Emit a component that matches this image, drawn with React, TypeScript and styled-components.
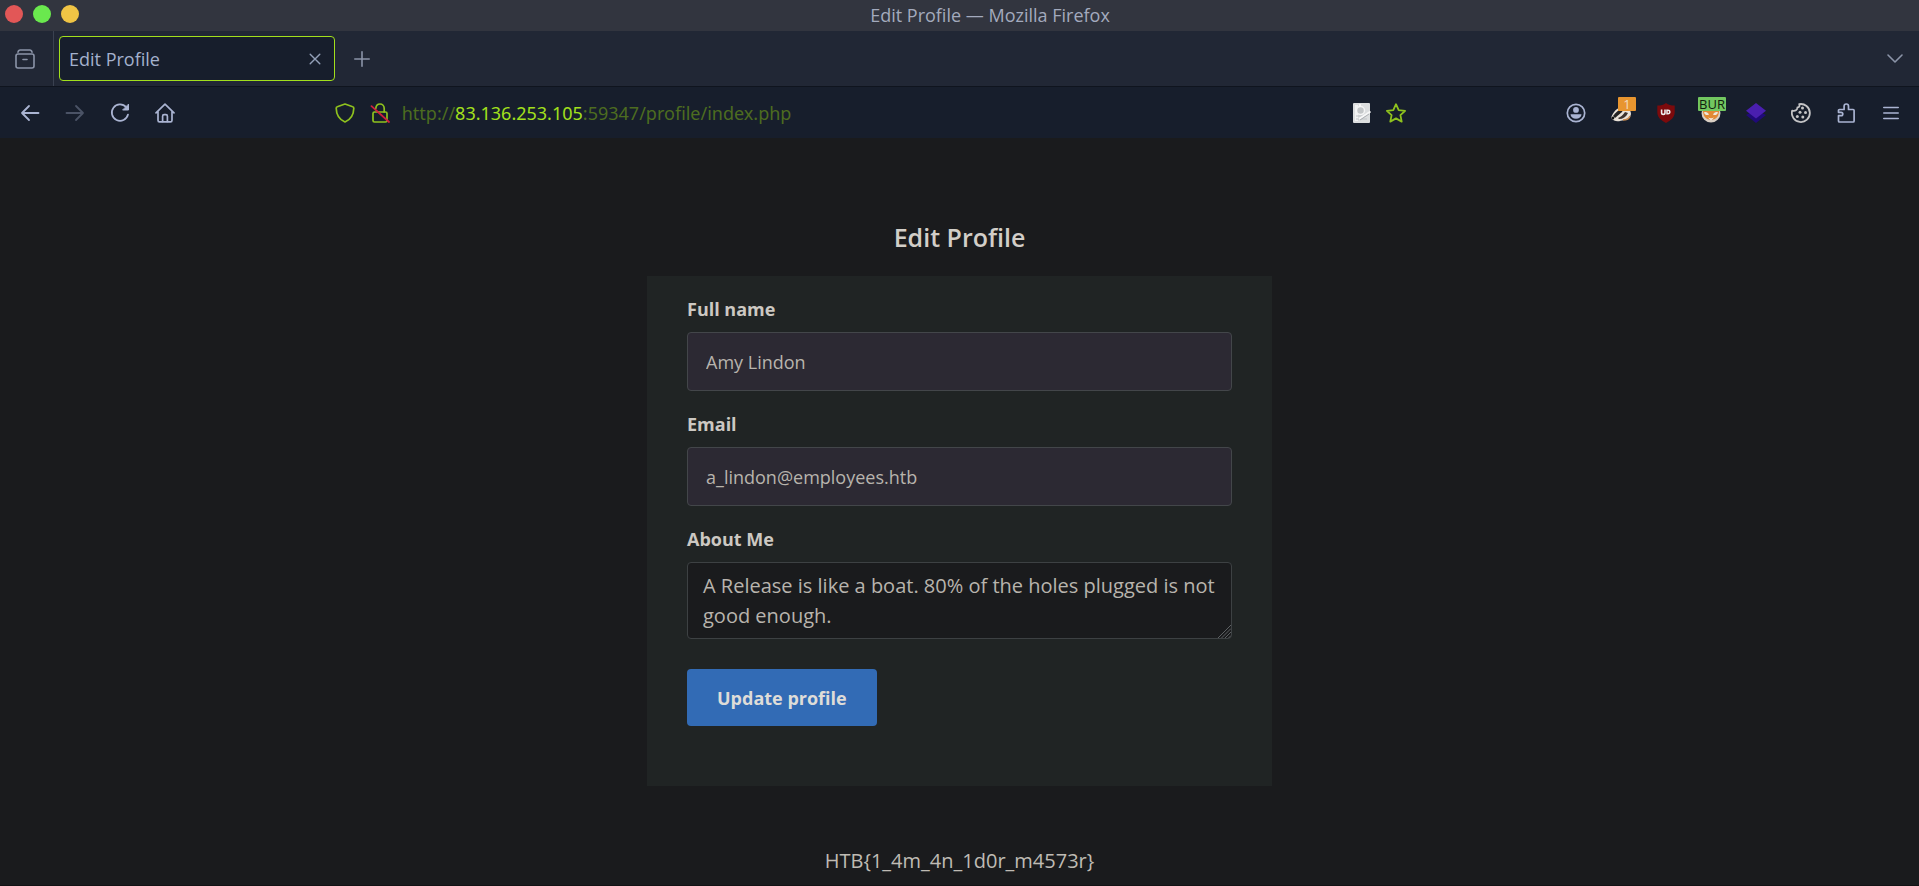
import React from "react";
import styled, { createGlobalStyle } from "styled-components";

const GlobalStyle = createGlobalStyle`
  *, *::before, *::after { box-sizing: border-box; }
  html, body { margin: 0; padding: 0; background: #1a1b1d; }
  body { font-family: "Open Sans", "Noto Sans", sans-serif; color: #bfbbb4; }
  button, input, textarea { font-family: inherit; }
`;

const Window = styled.div`
  display: flex;
  flex-direction: column;
  min-height: 100vh;
  border-bottom: 1px solid #121214;
`;

const TitleBar = styled.header`
  display: flex;
  align-items: center;
  height: 31px;
  padding: 0 18px 4px 5px;
  background: #32353f;
`;

const WindowButtons = styled.div`
  display: flex;
  gap: 10px;
`;

const WindowButton = styled.button<{ $color: string }>`
  width: 18px;
  height: 18px;
  padding: 0;
  border: 0;
  border-radius: 50%;
  background: ${(p) => p.$color};
`;

const WindowTitle = styled.div`
  flex: 1;
  padding-top: 2px;
  text-align: center;
  font-size: 18px;
  line-height: 24px;
  color: #a3aabd;
`;

const TabStrip = styled.div`
  display: flex;
  align-items: center;
  height: 56px;
  background: #212735;
  border-bottom: 1px solid #0f141e;
`;

const IconButton = styled.button<{ $width?: number; $color?: string }>`
  display: flex;
  flex: none;
  align-items: center;
  justify-content: center;
  position: relative;
  width: ${(p) => p.$width ?? 45}px;
  height: 40px;
  padding: 0;
  border: 0;
  background: transparent;
  color: ${(p) => p.$color ?? "#aab4d2"};
`;

const ViewArea = styled.div`
  display: flex;
  align-items: center;
  align-self: stretch;
  padding: 0 3px 0 0;
  border-right: 1px solid #3a4150;
`;

const Tab = styled.div`
  display: flex;
  align-items: center;
  justify-content: space-between;
  width: 276px;
  height: 45px;
  margin-left: 5px;
  padding: 0 4px 0 9px;
  border: 1px solid #a2e01c;
  border-radius: 4px;
  background: #171e2c;
  font-size: 18px;
  color: #a4b1cd;
`;

const Spacer = styled.div`
  flex: 1;
`;

const NavBar = styled.nav`
  display: flex;
  align-items: center;
  height: 51px;
  padding: 0 6px 0 7px;
  background: #171e2c;
`;

const Group = styled.div`
  display: flex;
`;

const AddressBar = styled.div`
  display: flex;
  flex: 8;
  align-items: center;
  min-width: 0;
  padding: 0 4px 0 5px;
`;

const Address = styled.span`
  flex: 1;
  padding-left: 4px;
  font-family: "Noto Sans", sans-serif;
  font-size: 18px;
  line-height: 26px;
  color: #4d6c20;
  white-space: nowrap;
  overflow: hidden;
  outline: none;
`;

const Host = styled.span`
  color: #a2e01c;
`;

const Badge = styled.span<{ $bg: string; $fg: string }>`
  position: absolute;
  top: 4px;
  right: 7px;
  min-width: 18px;
  padding: 0 1px;
  border-radius: 1px;
  background: ${(p) => p.$bg};
  color: ${(p) => p.$fg};
  font-size: 13px;
  line-height: 14px;
  text-align: center;
`;

const Page = styled.main`
  display: flex;
  flex: 1;
  flex-direction: column;
  align-items: center;
  padding: 83px 20px 8px;
`;

const Heading = styled.h1`
  margin: 0 0 22px;
  font-size: 25px;
  line-height: 33px;
  font-weight: 600;
  color: #d2cec8;
`;

const Card = styled.form`
  display: flex;
  flex-direction: column;
  width: 100%;
  max-width: 625px;
  padding: 20px 40px 60px;
  background: #202424;
`;

const Field = styled.div`
  display: flex;
  flex-direction: column;
  gap: 10px;
  margin-bottom: 20px;
`;

const Label = styled.label`
  font-size: 18px;
  line-height: 26px;
  font-weight: 700;
  color: #ccc8c2;
`;

const TextInput = styled.input`
  height: 59px;
  padding: 0 18px;
  border: 1px solid #43464a;
  border-radius: 4px;
  background: #2c2933;
  color: #b8b4ad;
  font-size: 18px;
  outline: none;
`;

const AreaWrap = styled.div`
  position: relative;
  display: flex;
`;

const TextArea = styled.textarea`
  flex: 1;
  height: 77px;
  padding: 8px 15px;
  border: 1px solid #3d4143;
  border-radius: 4px;
  background: #1a1b1d;
  color: #b8b4ad;
  font-size: 20px;
  line-height: 30px;
  resize: none;
  overflow: hidden;
  outline: none;
`;

const Grip = styled.svg`
  position: absolute;
  right: 1px;
  bottom: 1px;
`;

const SubmitButton = styled.button`
  align-self: flex-start;
  height: 57px;
  margin-top: 10px;
  padding: 0 30px;
  border: 0;
  border-radius: 4px;
  background: #326bb5;
  color: #dedcd8;
  font-size: 18px;
  font-weight: 700;
`;

const Flag = styled.p`
  margin: 60px 0 0;
  font-size: 20px;
  line-height: 30px;
`;

type IconProps = { size?: number; width?: number; children: React.ReactNode };

const Icon = ({ size = 20, width = 1.6, children }: IconProps) => (
  <svg
    width={size}
    height={size}
    viewBox="0 0 20 20"
    fill="none"
    stroke="currentColor"
    strokeWidth={width}
    strokeLinecap="round"
    strokeLinejoin="round"
    aria-hidden="true"
  >
    {children}
  </svg>
);

export default function App() {
  return (
    <Window>
      <GlobalStyle />
      <TitleBar>
        <WindowButtons>
          <WindowButton $color="#e25757" aria-label="Close window" />
          <WindowButton $color="#6ae84e" aria-label="Minimize window" />
          <WindowButton $color="#f0c445" aria-label="Maximize window" />
        </WindowButtons>
        <WindowTitle>Edit Profile — Mozilla Firefox</WindowTitle>
      </TitleBar>

      <TabStrip>
        <ViewArea>
          <IconButton $width={50} $color="#8b94a8" aria-label="Firefox View">
            <Icon>
              <path d="M3 3.2C3.3 1.6 4 1 5.200 1h9.600c1.200 0 1.900.6 2.200 2.200" />
              <rect x="1" y="5" width="18" height="14" rx="2" />
              <path d="M8 10.500h4" />
            </Icon>
          </IconButton>
        </ViewArea>
        <Tab>
          <span>Edit Profile</span>
          <IconButton $width={30} $color="#93a0b8" aria-label="Close tab">
            <Icon width={1.4}>
              <path d="M5.200 5.200l9.600 9.600M14.800 5.200l-9.600 9.600" />
            </Icon>
          </IconButton>
        </Tab>
        <IconButton $width={54} $color="#8b94a8" aria-label="New tab">
          <Icon>
            <path d="M10 2.800v14.400M2.800 10h14.400" />
          </Icon>
        </IconButton>
        <Spacer />
        <IconButton $width={48} $color="#8b94a8" aria-label="List all tabs">
          <Icon>
            <path d="M3 6l7 7 7-7" />
          </Icon>
        </IconButton>
      </TabStrip>

      <NavBar>
        <Group>
          <IconButton aria-label="Back">
            <Icon width={1.8}>
              <path d="M18.500 10H2M9 3l-7 7 7 7" />
            </Icon>
          </IconButton>
          <IconButton $color="#4b5366" aria-label="Forward">
            <Icon width={1.8}>
              <path d="M1.500 10H18M11 3l7 7-7 7" />
            </Icon>
          </IconButton>
          <IconButton aria-label="Reload">
            <Icon width={1.7}>
              <path d="M16.200 4.200A8.200 8.200 0 1 0 18 11.500" />
              <path d="M18.500 1.500v5.500h-5.500z" fill="currentColor" strokeWidth="1" />
            </Icon>
          </IconButton>
          <IconButton aria-label="Home">
            <Icon width={1.7}>
              <path d="M1 9.800L10 1.200l9 8.600M3 8.500V17.200c0 1 .5 1.700 1.500 1.700h11c1 0 1.500-.7 1.500-1.700V8.500" />
              <path d="M7.600 18.500v-5.200c0-1 .6-1.600 1.500-1.600h1.800c.9 0 1.500.6 1.500 1.600v5.200" />
            </Icon>
          </IconButton>
        </Group>
        <Spacer />
        <AddressBar>
          <IconButton $width={35} $color="#8fc21e" aria-label="Tracking protection">
            <Icon width={1.7}>
              <path d="M10 1l7.700 2.700c.7.200 1.100.7 1.100 1.500-.1 5.800-2.500 11-8.800 13.800C3.700 16.200 1.300 11 1.200 5.200c0-.8.400-1.300 1.100-1.500z" />
            </Icon>
          </IconButton>
          <IconButton $width={35} $color="#8fc21e" aria-label="Connection is not secure">
            <Icon width={1.7}>
              <rect x="3" y="9" width="14" height="10" rx="1.500" />
              <path d="M5.800 5.500C6 2.700 7.700 1 10 1c2.400 0 4.200 1.800 4.200 4.400V9" />
              <path d="M1.500 3.200L19 19" stroke="#d0203f" strokeWidth="1.800" />
            </Icon>
          </IconButton>
          <Address
            role="textbox"
            aria-label="Address"
            contentEditable
            suppressContentEditableWarning
            spellCheck={false}
          >
            http://<Host>83.136.253.105</Host>:59347/profile/index.php
          </Address>
          <IconButton $width={34} aria-label="Reader mode">
            <svg width="20" height="20" viewBox="0 0 20 20" aria-hidden="true">
              <rect x="1" y="0" width="17" height="20" rx="1" fill="#dcdedf" />
              <path d="M3 2h3v16H3z" fill="#f3f4f4" />
              <circle cx="8.500" cy="7.500" r="4" fill="#c3c6c8" stroke="#f5f5f5" strokeWidth="1.500" />
              <path d="M8 3.500V1" stroke="#fff" strokeWidth="1.500" />
              <path d="M4 13h9M4 16h11" stroke="#c0c3c6" />
              <path d="M7 16l11.500-7.500" stroke="#f8f8f8" strokeWidth="2" />
              <path d="M8 17l9-6" stroke="#9fa3a7" strokeWidth="0.800" />
            </svg>
          </IconButton>
          <IconButton $width={34} $color="#8fc21e" aria-label="Bookmark this page">
            <Icon width={1.8}>
              <path d="M10 1.200l2.700 5.900 6.400.7-4.700 4.300 1.300 6.500L10 15.400l-5.700 3.200 1.300-6.500L.9 7.800l6.400-.7z" />
            </Icon>
          </IconButton>
        </AddressBar>
        <Spacer />
        <Group>
          <IconButton aria-label="Account">
            <Icon width={1.7}>
              <circle cx="10" cy="10" r="8.700" />
              <circle cx="10" cy="6.900" r="2.900" fill="currentColor" stroke="none" />
              <path d="M4.500 11.200h11c-.2 2.900-2.500 4.500-5.500 4.500s-5.300-1.600-5.500-4.500z" fill="currentColor" stroke="none" />
            </Icon>
          </IconButton>
          <IconButton aria-label="Privacy extension">
            <svg width="20" height="20" viewBox="0 0 20 20" aria-hidden="true">
              <path d="M0 15C2 9 6 4 12 4c5 0 8 3 8 7-1 4-3 6-7 6-4 1-9 3-13-2z" fill="#e9e2d8" />
              <path d="M2 13C5 9 8 6 13 5l-2 4-7 6z" fill="#222" />
              <path d="M7 15c3-1 5-3 7-6l3 1c-2 4-5 6-9 6z" fill="#3c3430" />
              <path d="M12 17c3 0 6-1 7-4" stroke="#c7894d" strokeWidth="1.500" fill="none" />
              <circle cx="1.800" cy="15" r="1.500" fill="#111" />
            </svg>
            <Badge $bg="#e8952f" $fg="#f3dcc0">1</Badge>
          </IconButton>
          <IconButton aria-label="Content blocker">
            <svg width="20" height="20" viewBox="0 0 20 20" aria-hidden="true">
              <path d="M10 0c2.500 1.800 5 2.500 8.700 2.600V9c0 5.500-4 8.500-8.700 11-4.700-2.500-8.700-5.500-8.700-11V2.600C5 2.500 7.500 1.800 10 0z" fill="#7c0a0c" />
              <path d="M5.600 6.500v3.200a1.700 1.700 0 0 0 3.400 0V6.500" stroke="#eee" strokeWidth="1.600" fill="none" />
              <path d="M11 7.300v3.400h1a1.800 1.700 0 0 0 0-3.400z" stroke="#eee" strokeWidth="1.500" fill="none" />
            </svg>
          </IconButton>
          <IconButton aria-label="Proxy switcher">
            <svg width="20" height="20" viewBox="0 0 20 20" aria-hidden="true">
              <circle cx="10" cy="10" r="9.500" fill="#d9cfc4" />
              <path d="M1.500 7C5 5 15 5 18.500 7L17 13c-2 3-4 3.500-7 4-3-.5-5-1-7-4z" fill="#e28a35" />
              <path d="M3 9.500c2-1 4 0 5 2-1.500 1-4 1-5-2zM17 9.500c-2-1-4 0-5 2 1.500 1 4 1 5-2z" fill="#efe6da" />
              <path d="M7 14.500c1.500 1 4.500 1 6 0l-3 3z" fill="#f5eee6" />
            </svg>
            <Badge $bg="#72c760" $fg="#10210e">BUR</Badge>
          </IconButton>
          <IconButton aria-label="Technology profiler">
            <svg width="20" height="20" viewBox="0 0 20 20" aria-hidden="true">
              <path d="M0 12l4-2h12l4 2-10 8z" fill="#200a79" />
              <path d="M10 0l10 7.800L10 15.400 0 7.800z" fill="#4a1fb0" />
            </svg>
          </IconButton>
          <IconButton $color="#c4c4c6" aria-label="Cookie editor">
            <Icon width={1.8}>
              <path d="M8.200 1.200c.8 1.800-.1 3.300-1.800 3.300.2 2.400-2.200 3.900-5.200 3.100A9 9 0 1 0 8.200 1.200z" />
              <g fill="currentColor" stroke="none">
                <circle cx="11.500" cy="5" r="1.500" />
                <circle cx="9" cy="9.300" r="1.500" />
                <circle cx="14.500" cy="9.500" r="1.500" />
                <circle cx="6.300" cy="13.500" r="1.500" />
                <circle cx="11.800" cy="14" r="1.500" />
              </g>
            </Icon>
          </IconButton>
          <IconButton aria-label="Extensions">
            <Icon width={1.7}>
              <path d="M2.500 12.700V18c0 .6.400 1 1 1h13.600c.6 0 1-.4 1-1V7.500c0-.6-.4-1-1-1H12.500V3.200a2.200 2.200 0 0 0-4.400 0V6.500H3.500c-.6 0-1 .4-1 1V9.300h2.600a1.700 1.700 0 0 1 0 3.400z" />
            </Icon>
          </IconButton>
          <IconButton aria-label="Open application menu">
            <Icon width={1.6}>
              <path d="M2.800 4.500h14.400M2.800 10h14.400M2.800 15.500h14.400" />
            </Icon>
          </IconButton>
        </Group>
      </NavBar>

      <Page>
        <Heading>Edit Profile</Heading>
        <Card onSubmit={(e) => e.preventDefault()}>
          <Field>
            <Label htmlFor="full-name">Full name</Label>
            <TextInput id="full-name" type="text" defaultValue="Amy Lindon" />
          </Field>
          <Field>
            <Label htmlFor="email">Email</Label>
            <TextInput id="email" type="email" defaultValue="a_lindon@employees.htb" />
          </Field>
          <Field>
            <Label htmlFor="about">About Me</Label>
            <AreaWrap>
              <TextArea
                id="about"
                defaultValue="A Release is like a boat. 80% of the holes plugged is not good enough."
              />
              <Grip width="14" height="14" viewBox="0 0 14 14" stroke="#5c6062" aria-hidden="true">
                <path d="M1 14L14 1M4.500 14L14 4.500M8 14l6-6M11.500 14l2.500-2.500" />
              </Grip>
            </AreaWrap>
          </Field>
          <SubmitButton type="submit">Update profile</SubmitButton>
        </Card>
        <Flag>HTB&#123;1_4m_4n_1d0r_m4573r&#125;</Flag>
      </Page>
    </Window>
  );
}
